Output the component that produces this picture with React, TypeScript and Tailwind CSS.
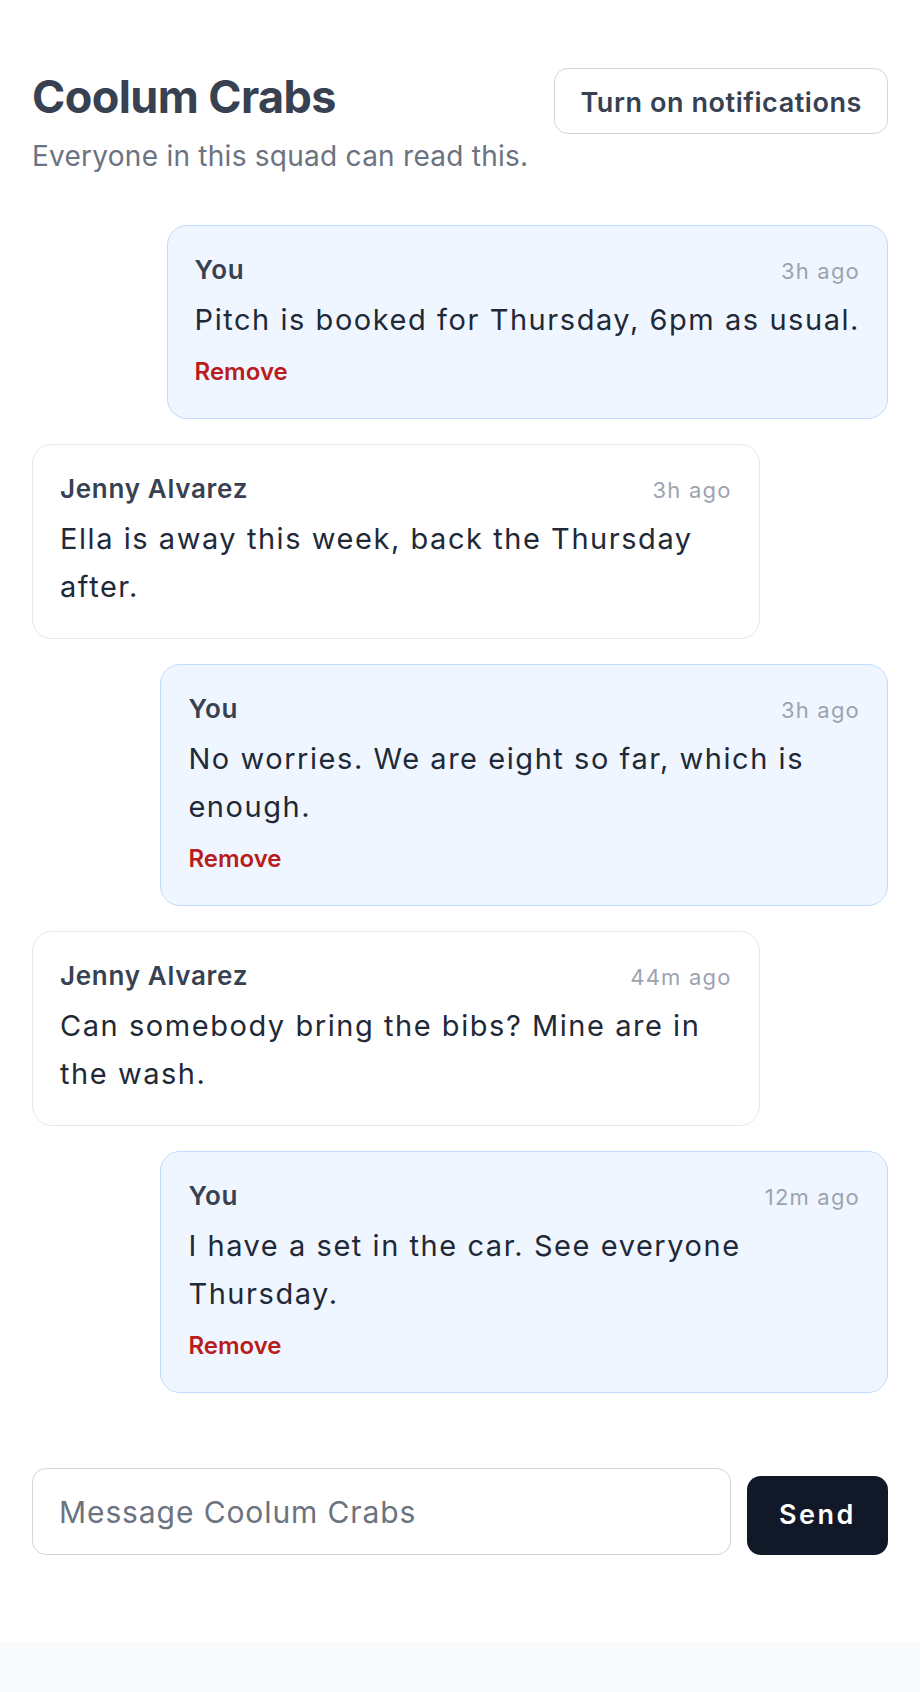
import React from "react";

type Msg = { mine: boolean; name: string; time: string; text: string };

const messages: Msg[] = [
  { mine: true, name: "You", time: "3h ago", text: "Pitch is booked for Thursday, 6pm as usual." },
  { mine: false, name: "Jenny Alvarez", time: "3h ago", text: "Ella is away this week, back the Thursday after." },
  { mine: true, name: "You", time: "3h ago", text: "No worries. We are eight so far, which is enough." },
  { mine: false, name: "Jenny Alvarez", time: "44m ago", text: "Can somebody bring the bibs? Mine are in the wash." },
  { mine: true, name: "You", time: "12m ago", text: "I have a set in the car. See everyone Thursday." },
];

function Bubble({ m }: { m: Msg }) {
  return (
    <div
      className={
        m.mine
          ? "self-end max-w-[85%] rounded-[20px] border border-[#bfdbfe] bg-[#eff6ff] p-[27px]"
          : "self-start max-w-[85%] rounded-[20px] border border-[#e5e7eb] bg-white p-[27px]"
      }
    >
      <div className="mb-2 flex items-baseline justify-between gap-4">
        <span className="text-[26px] leading-[34px] font-semibold tracking-[0.7px] text-[#374151]">{m.name}</span>
        <span className="text-[22px] leading-[34px] tracking-[1.2px] text-[#9ca3af]">{m.time}</span>
      </div>
      <p className="text-[29px] leading-[48px] tracking-[1.55px] text-[#1f2937]">{m.text}</p>
      {m.mine && (
        <button className="mt-[10px] mb-[2px] block text-[24px] leading-[35px] font-semibold text-[#b91c1c]">
          Remove
        </button>
      )}
    </div>
  );
}

export default function App() {
  return (
    <div className="min-h-[1692px] bg-[#f9fafb] font-['Inter',sans-serif]">
      <div className="bg-white px-8 pt-[68px] pb-[88px]">
        <div className="flex items-start justify-between">
          <div>
            <h1 className="text-[45px] leading-[58px] font-bold tracking-[-0.6px] text-[#374151]">Coolum Crabs</h1>
            <p className="mt-[10px] text-[28px] leading-[40px] tracking-[0.26px] text-[#6b7280]">
              Everyone in this squad can read this.
            </p>
          </div>
          <button className="rounded-[14px] border border-[#d1d5db] bg-white px-[25px] pt-[17px] pb-[13px] text-[27px] leading-[34px] font-semibold tracking-[0.57px] text-[#374151]">
            Turn on notifications
          </button>
        </div>

        <div className="mt-[49px] flex flex-col gap-[25px]">
          {messages.map((m, i) => (
            <Bubble key={i} m={m} />
          ))}
        </div>

        <div className="mt-[75px] flex items-end gap-4">
          <input
            className="h-[87px] flex-1 rounded-[14px] border border-[#d1d5db] bg-white px-[26px] text-[30px] tracking-[0.9px] text-[#1f2937] outline-none placeholder:text-[#6b7280]"
            placeholder="Message Coolum Crabs"
          />
          <button className="h-[79px] w-[141px] rounded-[14px] bg-[#111827] text-[27px] font-semibold tracking-[2.5px] text-white">
            Send
          </button>
        </div>
      </div>
    </div>
  );
}
